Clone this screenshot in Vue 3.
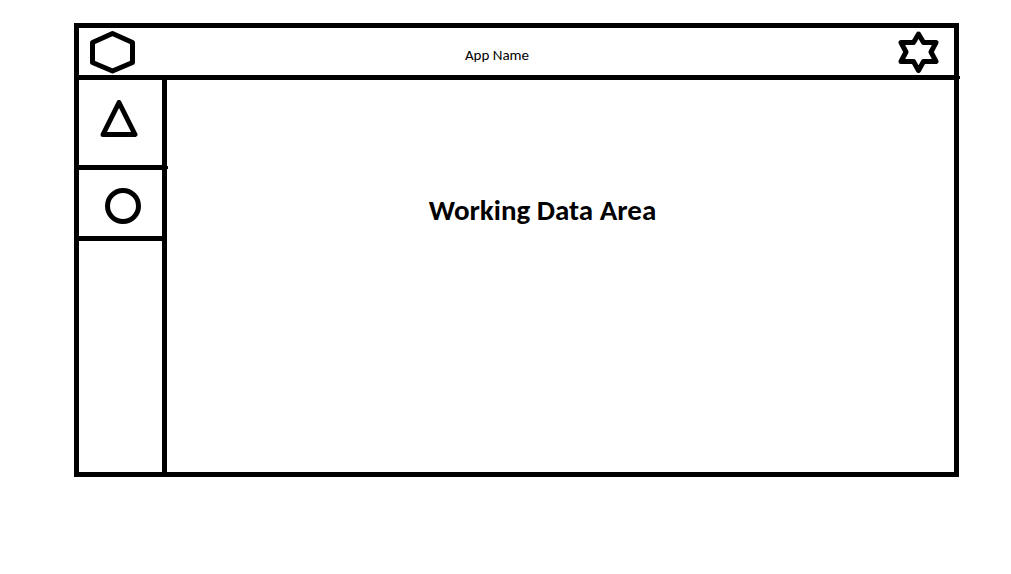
<script setup>
const appName = 'App Name'
const heading = 'Working Data Area'
</script>

<template>
  <div class="frame">
    <header class="topbar">
      <button class="icon-button" type="button" aria-label="Home">
        <svg width="46" height="44" viewBox="0 0 46 44">
          <path d="M22.5 3.5 L42.5 12.5 V32.5 L22.5 41 L2.5 32.5 V12.5 Z" />
        </svg>
      </button>
      <span class="app-name">{{ appName }}</span>
      <button class="icon-button" type="button" aria-label="Favourites">
        <svg width="42" height="44" viewBox="0 0 42 44">
          <path d="M20.5 4 L25.5 12.5 H38 L33 22 L38 31.5 H25.5 L20.5 40.5 L15.5 31.5 H3 L8 22 L3 12.5 H15.5 Z" />
        </svg>
      </button>
    </header>
    <div class="body">
      <nav class="sidebar">
        <button class="nav-item triangle" type="button" aria-label="Triangle">
          <svg width="38" height="38" viewBox="0 0 38 38">
            <path d="M19 2.5 L35 34.5 H3 Z" />
          </svg>
        </button>
        <button class="nav-item circle" type="button" aria-label="Circle">
          <svg width="36" height="36" viewBox="0 0 36 36">
            <circle cx="18" cy="18" r="15.5" />
          </svg>
        </button>
      </nav>
      <main class="content">
        <h1>{{ heading }}</h1>
      </main>
    </div>
  </div>
</template>

<style>
body {
  background: #fff;
}
</style>

<style scoped>
.frame {
  margin: 23px 52px 0 74px;
  border: 5px solid #000;
  color: #000;
  font-family: Carlito, Calibri, Lato, sans-serif;
}

button {
  display: flex;
  margin: 0;
  padding: 0;
  border: 0;
  background: none;
  color: inherit;
  cursor: pointer;
}

svg {
  display: block;
  fill: none;
  stroke: currentColor;
  stroke-width: 5;
  stroke-linejoin: round;
}

.topbar {
  position: relative;
  display: flex;
  align-items: center;
  justify-content: space-between;
  padding: 2px 14px 1px 11px;
  border-bottom: 5px solid #000;
}

.topbar::after {
  content: "";
  position: absolute;
  right: -6px;
  bottom: -4px;
  width: 1px;
  height: 3px;
  background: #000;
}

.app-name {
  margin: 6px 40px 0 0;
  font-size: 15px;
  line-height: 18px;
}

.body {
  display: flex;
  min-height: 392px;
}

.sidebar {
  flex: 0 0 83px;
  border-right: 5px solid #000;
}

.nav-item {
  position: relative;
  width: 100%;
  border-bottom: 5px solid #000;
}

.triangle {
  padding: 20px 0 27px 21px;
}

.triangle::after {
  content: "";
  position: absolute;
  right: -6px;
  bottom: -4px;
  width: 1px;
  height: 3px;
  background: #000;
}

.circle {
  padding: 18px 0 12px 26px;
}

.content {
  flex: 1;
  padding: 112px 36px 0 0;
  text-align: center;
}

h1 {
  margin: 0;
  font-size: 29px;
  line-height: 36px;
  font-weight: 700;
}
</style>
